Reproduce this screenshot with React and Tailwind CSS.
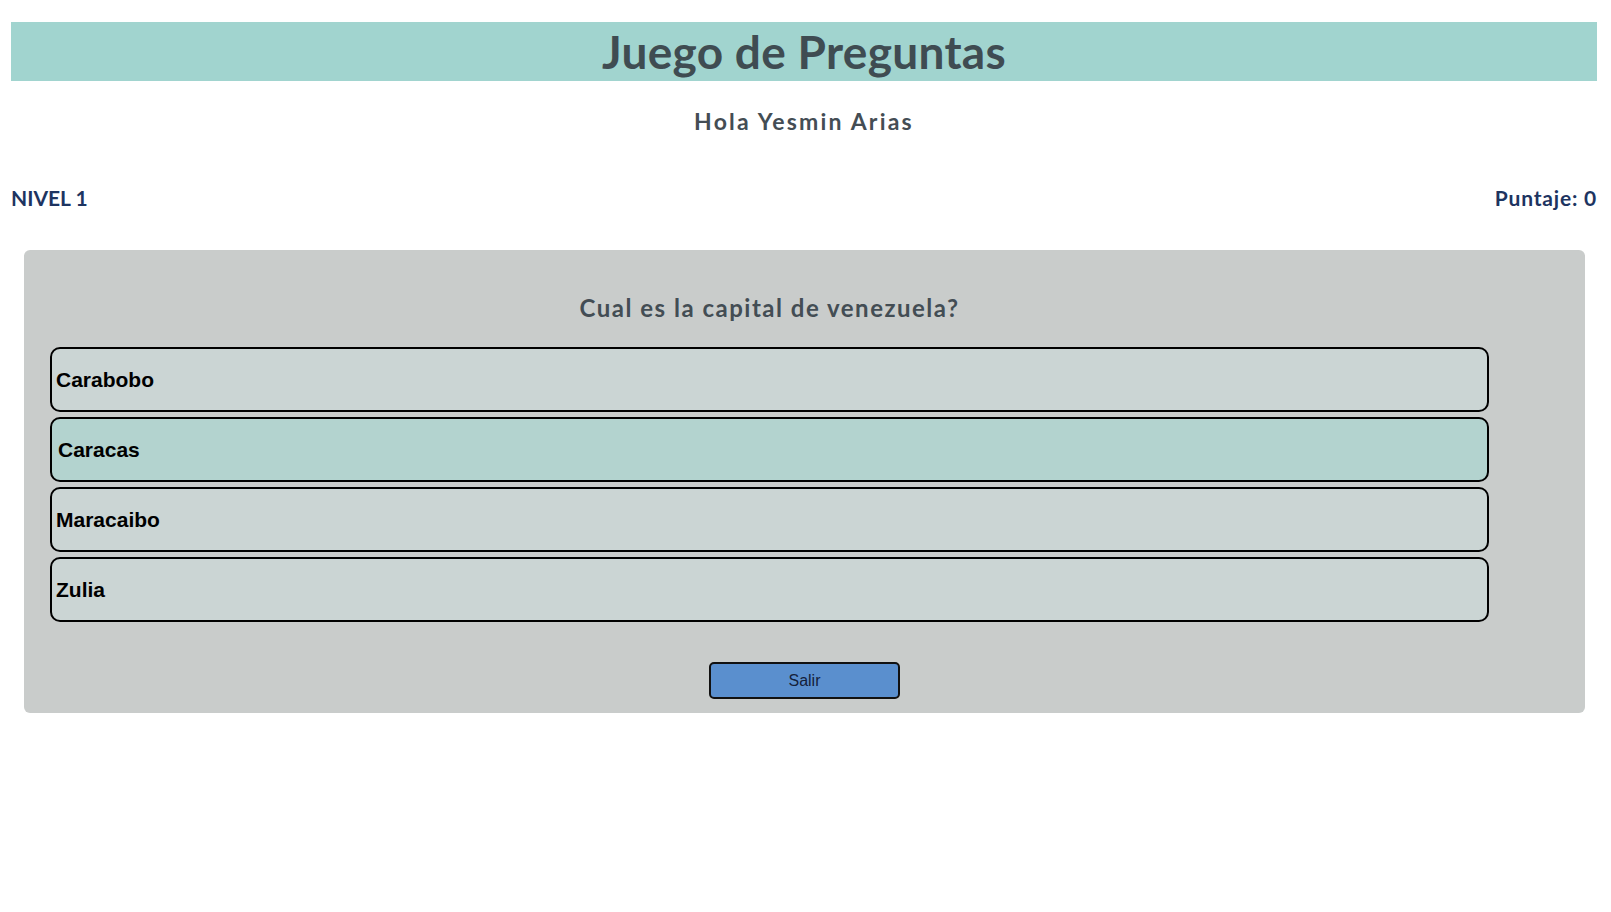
import React, { useState } from 'react';

const opciones = ['Carabobo', 'Caracas', 'Maracaibo', 'Zulia'];

function App() {
  const [hover, setHover] = useState('Caracas');
  const [puntaje] = useState(0);

  return (
    <div className="min-h-screen bg-white pl-[11px] pr-[14px] pt-[22px] font-['Lato',sans-serif]">
      <header className="h-[59px] bg-[#a1d4cf] flex items-center justify-center">
        <h1 className="text-[46px] leading-none font-bold text-[#3f4c52] tracking-[0.3px]">Juego de Preguntas</h1>
      </header>

      <h2 className="mt-[29px] text-center text-[23px] leading-none font-bold text-[#444d54] tracking-[2.2px]">
        Hola Yesmin Arias
      </h2>

      <div className="mt-[54px] flex justify-between text-[21px] leading-none font-bold text-[#1d3461]">
        <span>NIVEL 1</span>
        <span className="tracking-[0.8px]">Puntaje: {puntaje}</span>
      </div>

      <section className="mt-[42px] ml-[13px] mr-[12px] bg-[#c9cccb] rounded-[6px] pt-[46px] pb-[14px]">
        <div className="ml-[26px] w-[1439px]">
          <h3 className="text-center text-[24px] leading-none font-bold text-[#434d54] tracking-[1.5px]">
            Cual es la capital de venezuela?
          </h3>
          <div className="mt-[27px] flex flex-col gap-[5px]">
            {opciones.map(op => (
              <button
                key={op}
                onMouseEnter={() => setHover(op)}
                className={`h-[65px] w-full rounded-[10px] border-2 border-black text-left text-[21px] font-bold text-black font-['Liberation_Sans',Arial,sans-serif] ${hover === op ? 'bg-[#b3d3cf] pl-[6px]' : 'bg-[#cbd5d4] pl-[4px]'}`}
              >
                {op}
              </button>
            ))}
          </div>
        </div>
        <div className="mt-[40px] flex justify-center">
          <button className="h-[37px] w-[191px] rounded-[5px] border-2 border-[#111] bg-[#5a8fce] text-[16px] text-[#14213a] font-['Liberation_Sans',Arial,sans-serif]">
            Salir
          </button>
        </div>
      </section>
    </div>
  );
}

export default App;
